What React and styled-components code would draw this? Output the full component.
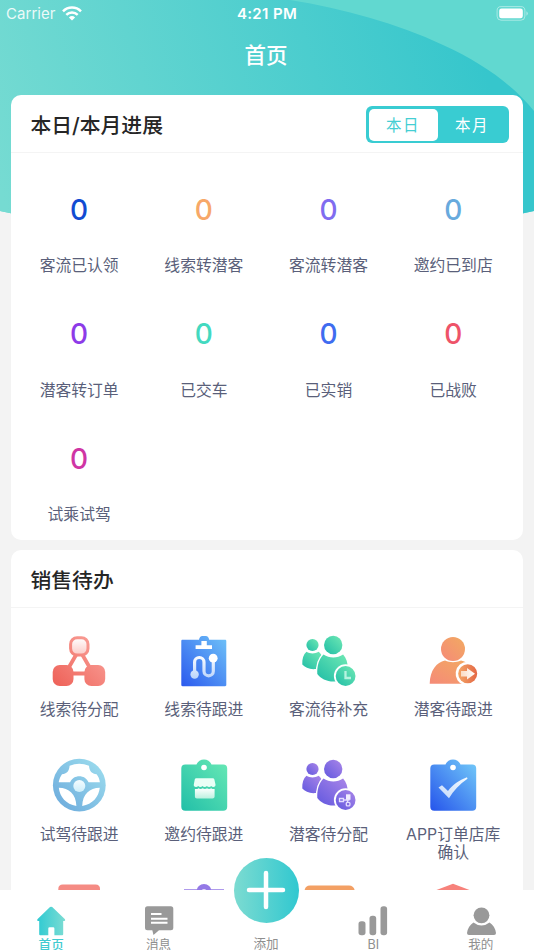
import { useState } from 'react'
import styled, { createGlobalStyle } from 'styled-components'

const GlobalStyle = createGlobalStyle`
  * {
    box-sizing: border-box;
  }

  body {
    margin: 0;
    background: #f3f3f3;
    overflow: hidden;
    font-family: Inter, 'Noto Sans CJK SC', sans-serif;
  }

  svg {
    display: block;
    flex: none;
  }

  button {
    border: 0;
    padding: 0;
    background: none;
    font: inherit;
  }
`

const Screen = styled.div`
  position: relative;
  display: flex;
  flex-direction: column;
  height: 950px;
  overflow: hidden;
  background: #f3f3f3;
`

const Backdrop = styled.svg`
  position: absolute;
  top: 0;
  left: 0;
`

const StatusBar = styled.div`
  position: relative;
  display: grid;
  grid-template-columns: 1fr auto 1fr;
  align-items: center;
  flex: none;
  height: 26px;
  padding: 0 6px 0 6px;
  color: #fff;
  font-size: 15px;
`

const Carrier = styled.div`
  display: flex;
  align-items: center;
  gap: 6px;
  color: rgba(255, 255, 255, 0.88);
  letter-spacing: 0.05px;
`

const Clock = styled.div`
  font-weight: 600;
  letter-spacing: 0.35px;
`

const Battery = styled.svg`
  justify-self: end;
`

const NavTitle = styled.h1`
  position: relative;
  flex: none;
  height: 69px;
  margin: 0;
  padding-right: 2px;
  color: #fff;
  font-size: 21.5px;
  font-weight: 500;
  line-height: 58px;
  text-align: center;
`

const Content = styled.main`
  position: relative;
  flex: 1;
  min-height: 0;
  padding: 0 11.5px 0 10.5px;
  overflow: hidden;
`

const Card = styled.section`
  height: ${(props) => props.$height}px;
  margin-bottom: 10.5px;
  border-radius: 10px;
  background: #fff;
`

const CardHeader = styled.header`
  display: flex;
  align-items: center;
  justify-content: space-between;
  height: 58px;
  padding: 2px 13.5px 0 20px;
  border-bottom: 1.5px solid #f4f4f4;
`

const CardTitle = styled.h2`
  margin: 0;
  padding-top: 3px;
  color: #262626;
  font-size: 20.8px;
  font-weight: 500;
  line-height: 30px;
`

const Segmented = styled.div`
  display: flex;
  width: 143px;
  height: 37px;
  padding: 2.5px;
  border-radius: 6px;
  background: #39ccd2;
`

const Segment = styled.button`
  flex: 1;
  padding-top: 2px;
  border-radius: 5px;
  background: ${(props) => (props.$active ? '#fff' : 'transparent')};
  color: ${(props) => (props.$active ? '#45ced3' : '#fff')};
  font-size: 15.5px;
  letter-spacing: 1.5px;
  line-height: 30px;
`

const Grid = styled.div`
  display: grid;
  grid-template-columns: repeat(4, 124.7px);
  grid-auto-rows: 124.5px;
  padding-left: 6.3px;
`

const Stat = styled.div`
  display: flex;
  flex-direction: column;
  align-items: center;
  padding-top: 39.5px;
`

const StatValue = styled.span`
  height: 34px;
  color: ${(props) => props.$color};
  font-size: 28px;
  font-weight: 500;
  line-height: 34px;
`

const Label = styled.span`
  margin-top: ${(props) => props.$gap}px;
  color: #5a5f7a;
  font-size: 15.8px;
  font-weight: 400;
  line-height: 18px;
  text-align: center;
  white-space: pre-line;
`

const Task = styled.div`
  display: flex;
  flex-direction: column;
  align-items: center;
  padding-top: 24.5px;
`

const TabBar = styled.nav`
  position: relative;
  display: grid;
  grid-template-columns: repeat(5, 107.4px);
  flex: none;
  height: 60px;
  margin-left: -2.5px;
  background: #fff;
`

const Tab = styled.button`
  display: flex;
  flex-direction: column;
  align-items: center;
  height: 60px;
  padding-top: 15px;
  color: ${(props) => (props.$active ? '#3fcbd0' : '#8f8f8f')};
  font-size: 12.6px;
  font-weight: ${(props) => (props.$active ? 500 : 400)};
  line-height: 13px;

  span {
    margin-top: 0.5px;
  }
`

const AddTab = styled(Tab)`
  padding-top: 0;

  span {
    margin-top: 14.5px;
  }
`

const AddButton = styled.div`
  display: grid;
  place-items: center;
  flex: none;
  width: 65px;
  height: 65px;
  margin-top: -32.5px;
  margin-left: 0.5px;
  border-radius: 50%;
  background: linear-gradient(90deg, #7cdbd1, #31c8d0);
`

function Gradient({ id, from, to, vertical }) {
  return (
    <linearGradient id={id} x1="0" y1={vertical ? '0' : '1'} x2={vertical ? '0' : '1'} y2={vertical ? '1' : '0'}>
      <stop offset="0" stopColor={from} />
      <stop offset="1" stopColor={to} />
    </linearGradient>
  )
}

function Icon({ children }) {
  return (
    <svg width="56" height="56" viewBox="0 0 56 56" fill="none">
      {children}
    </svg>
  )
}

function ShareIcon() {
  return (
    <Icon>
      <defs>
        <linearGradient id="share" gradientUnits="userSpaceOnUse" x1="4" y1="52" x2="46" y2="10">
          <stop offset="0" stopColor="#ee6259" />
          <stop offset="1" stopColor="#f99d95" />
        </linearGradient>
        <Gradient id="shareTop" vertical from="#fff" to="#fbc9c5" />
      </defs>
      <path d="M25 22 17.5 35M31.5 22 39 35M20 40.5h16" stroke="url(#share)" strokeWidth="3.8" />
      <rect x="19.6" y="4.7" width="17.4" height="17.4" rx="6.5" fill="url(#shareTop)" stroke="url(#share)" strokeWidth="3" />
      <rect x="1.7" y="32" width="20.8" height="21" rx="7" fill="url(#share)" />
      <rect x="33.4" y="32" width="20.8" height="21" rx="7" fill="url(#share)" />
    </Icon>
  )
}

function RouteIcon() {
  return (
    <Icon>
      <defs>
        <Gradient id="route" from="#2b59ee" to="#6fc3f8" />
        <linearGradient id="routeLine" gradientUnits="userSpaceOnUse" x1="28" y1="22" x2="28" y2="45">
          <stop offset="0" stopColor="#fff" />
          <stop offset="1" stopColor="#bcd5fb" />
        </linearGradient>
      </defs>
      <path d="M6.5 6.7H23c.3-2.3 1.6-3.7 3.4-3.7h3.4c1.8 0 3.1 1.4 3.4 3.7h15.9c.7 0 1.2.5 1.2 1.2v44.2c0 .7-.5 1.2-1.2 1.2H6.5c-.7 0-1.2-.5-1.2-1.2V7.9c0-.7.5-1.2 1.2-1.2Z" fill="url(#route)" />
      <path d="M25.4 8h5.4v4.2H36V16H19.6v-3.8h5.8Z" fill="#fff" />
      <path d="M18.6 41V29.2a4.7 4.7 0 0 1 9.4 0v9a4.65 4.65 0 0 0 9.3 0V25" stroke="url(#routeLine)" strokeWidth="3.2" />
      <circle cx="18.6" cy="41.5" r="4.2" fill="url(#routeLine)" />
      <circle cx="37.2" cy="25.2" r="4.4" fill="#fff" />
    </Icon>
  )
}

function PeopleIcon({ id, from, to, children }) {
  const fill = `url(#${id})`
  return (
    <Icon>
      <defs>
        <Gradient id={id} from={from} to={to} />
      </defs>
      <circle cx="11.5" cy="12" r="6.1" fill={fill} />
      <path d="M5.5 18.8c3.6 2.3 8.4 2.3 12 0 1.4 1 2.4 2.3 3.2 4L15 36C9 36.7 4 34.8 1.3 31.6 1 26 2.4 21.4 5.5 18.8Z" fill={fill} />
      <path
        d="M22.5 21.5c5.8 4 13.8 4 19.6 0 3.4 3.7 4.7 8.5 4.6 13.5L41 46.5c-8.5 4.5-20.5 1-24.7-5.5-.4-8 1.7-15.3 6.2-19.5Z"
        fill={fill}
        stroke="#fff"
        strokeWidth="2.6"
        paintOrder="stroke"
      />
      <circle cx="32.2" cy="12" r="9.2" fill={fill} />
      <circle cx="44.6" cy="43" r="11.7" fill="#fff" />
      <circle cx="44.6" cy="43" r="9.9" fill={fill} />
      {children}
    </Icon>
  )
}

function FollowIcon() {
  return (
    <Icon>
      <defs>
        <Gradient id="follow" from="#f58a78" to="#f2aa61" />
        <linearGradient id="followBadge" x1="0" y1="0" x2="1" y2="0">
          <stop offset="0" stopColor="#f3a666" />
          <stop offset="1" stopColor="#e46745" />
        </linearGradient>
        <linearGradient id="followArrow" x1="0" y1="0" x2="1" y2="0">
          <stop offset="0" stopColor="#fbdcc4" />
          <stop offset="1" stopColor="#fff" />
        </linearGradient>
      </defs>
      <path d="M4.7 50.8C5.2 37 11.5 29.5 20 27.6c5 2.3 11 2.3 16 0 3.5.8 6.500 2.2 9 4.7v18.5Z" fill="url(#follow)" />
      <circle cx="28" cy="16" r="12" fill="url(#follow)" />
      <path d="M42.7 28.7a12 12 0 0 0-3.500 23.500h12.500v-23.500Z" fill="#fff" />
      <circle cx="42.7" cy="40.7" r="9.5" fill="url(#followBadge)" />
      <path d="M36 38h6v-3l8 5.7-8 5.7v-3h-6Z" fill="url(#followArrow)" />
    </Icon>
  )
}

function WheelIcon() {
  return (
    <Icon>
      <defs>
        <Gradient id="wheel" from="#69a7db" to="#9fe0ef" />
        <Gradient id="wheelHub" vertical from="#f4fcff" to="#cdeefa" />
      </defs>
      <circle cx="28.3" cy="28.2" r="26.4" fill="url(#wheel)" />
      <path d="M7.7 25.3C8.3 22 9.5 19.5 11 17.3c4.5-.2 7.3-3.3 7.6-8.5q9.7-4.2 19.4 0c.3 5.2 3.1 8.3 7.6 8.5 1.7 2.2 2.9 4.7 3.3 8H37.5c-3-8.200-15.400-8.200-18.400 0Z" fill="#fff" />
      <path d="M7.8 30.8C18 31 25 37 25.4 49 15 47.3 8.8 40 7.8 30.8ZM48.8 30.8C38.6 31 31.6 37 31.2 49c10.4-1.7 16.6-9 17.6-18.2Z" fill="#fff" />
      <circle cx="28.3" cy="29" r="6" fill="url(#wheelHub)" />
    </Icon>
  )
}

function ClipIcon({ id, from, to, children }) {
  return (
    <Icon>
      <defs>
        <Gradient id={id} from={from} to={to} />
      </defs>
      <path
        d="M9.3 7.6h11.2c1-3 3.9-5.1 7.5-5.1s6.5 2.1 7.5 5.1h11.7a4 4 0 0 1 4 4v38.1a4 4 0 0 1-4 4H9.3a4 4 0 0 1-4-4V11.6a4 4 0 0 1 4-4Z"
        fill={`url(#${id})`}
      />
      <circle cx="28" cy="10.5" r="2.8" fill="#fff" />
      {children}
    </Icon>
  )
}

function ShopIcon() {
  return (
    <ClipIcon id="shop" from="#22bfa8" to="#68e9b5">
      <defs>
        <Gradient id="shopBase" vertical from="#fff" to="#bdf1e0" />
      </defs>
      <path d="M20.2 21.2h16.700c.7 0 1.2.4 1.4 1.1l1.2 5.2c.2 1.5-.7 2.5-2.1 2.5-1 0-1.7-.4-2.2-1.1-.9 1.5-3.3 1.5-4.3 0-1 1.5-3.4 1.5-4.400 0-1 1.500-3.300 1.500-4.300 0-.6.7-1.300 1.100-2.200 1.100-1.600 0-2.500-1-2.200-2.500l1-5.200c.2-.7.7-1.100 1.400-1.100Z" fill="#eafff6" />
      <path d="M18.9 32c1.6.3 2.8-.1 3.6-.8 1.2 1 3 1 4.2 0 1.2 1 3.2 1 4.3 0 1.2 1 3.1 1 4.2 0 .9.7 2 1.1 3.4.8v7.5c0 1.2-.9 2-2 2H20.900c-1.200 0-2-.8-2-2Z" fill="url(#shopBase)" />
    </ClipIcon>
  )
}

function CheckIcon() {
  return (
    <ClipIcon id="check" from="#2554eb" to="#74ccf9">
      <defs>
        <Gradient id="checkMark" from="#c4dafb" to="#f4faff" />
      </defs>
      <path d="M13.5 30.5 17 28.3 23 34c5-6.5 11-10.8 19-13.7l.5 1.5C34.5 27.5 28.5 33.5 24 41.3Z" fill="url(#checkMark)" />
    </ClipIcon>
  )
}

const stats = [
  { label: '客流已认领', color: '#124bd2' },
  { label: '线索转潜客', color: '#f7a868' },
  { label: '客流转潜客', color: '#806cf0' },
  { label: '邀约已到店', color: '#68aadd' },
  { label: '潜客转订单', color: '#8d3be8' },
  { label: '已交车', color: '#43d9c0' },
  { label: '已实销', color: '#3f6cf0' },
  { label: '已战败', color: '#ee5369' },
  { label: '试乘试驾', color: '#cf35a4' },
]

const tasks = [
  { label: '线索待分配', icon: <ShareIcon /> },
  { label: '线索待跟进', icon: <RouteIcon /> },
  {
    label: '客流待补充',
    icon: (
      <PeopleIcon id="fill" from="#20bda6" to="#70e9b4">
        <path d="M44.5 38v7h5.5" stroke="#b6f3df" strokeWidth="2.3" />
      </PeopleIcon>
    ),
  },
  { label: '潜客待跟进', icon: <FollowIcon /> },
  { label: '试驾待跟进', icon: <WheelIcon /> },
  { label: '邀约待跟进', icon: <ShopIcon /> },
  {
    label: '潜客待分配',
    icon: (
      <PeopleIcon id="assign" from="#6258df" to="#aa86e8">
        <path d="M38.5 41.5h4v3h-4ZM42.5 43h6M46.5 43v3" stroke="#e4ddff" strokeWidth="1.3" />
        <path d="M45 37.3h4.5v5.500H45Z" fill="#f2edff" />
        <rect x="45.3" y="45.3" width="3.6" height="3.6" rx="1" stroke="#e4ddff" strokeWidth="1.3" />
      </PeopleIcon>
    ),
  },
  { label: 'APP订单店库\n确认', icon: <CheckIcon /> },
  {
    icon: (
      <Icon>
        <path d="M7.3 20V7q0-4.500 4.500-4.500h32.700q4.500 0 4.500 4.500V20Z" fill="#f58b84" />
      </Icon>
    ),
  },
  {
    icon: (
      <Icon>
        <path d="M8 7.2h40V20H8Z" fill="#9479e6" />
        <circle cx="28" cy="9.2" r="7.3" fill="#9479e6" />
        <circle cx="28" cy="10.2" r="3" fill="#fff" />
      </Icon>
    ),
  },
  {
    icon: (
      <Icon>
        <path d="M3.5 20V9Q4 3.500 9 3.500h39q5 0 5.800 5.500V20Z" fill="#f3a064" />
      </Icon>
    ),
  },
  {
    icon: (
      <Icon>
        <path d="m28 1.8 28 10.500H0Z" fill="#f7827b" />
      </Icon>
    ),
  },
]

const tabs = [
  {
    label: '首页',
    icon: (
      <svg width="32" height="32" viewBox="0 0 32 32">
        <defs>
          <linearGradient id="home" x1="0" y1="0" x2="1" y2="0">
            <stop offset="0" stopColor="#2fcad2" />
            <stop offset="1" stopColor="#7cdcd3" />
          </linearGradient>
        </defs>
        <path d="M15 2.1q1.1-.9 2.2 0L30 14.3q.6 1.5-.6 1.8h-1.200v13.200q0 1-1 1h-7.800V23.500q0-1.300-1.300-1.300h-3.500q-1.300 0-1.300 1.300v6.800H5.200q-1 0-1-1V16.100H3q-1.400-.4-.6-1.800Z" fill="url(#home)" />
      </svg>
    ),
  },
  {
    label: '消息',
    icon: (
      <svg width="32" height="32" viewBox="0 0 32 32" fill="none">
        <path d="M4.5 1.3h23.300a2.500 2.500 0 0 1 2.500 2.500v19a2.500 2.500 0 0 1-2.500 2.500H16L10.500 30 9.300 25.300H4.500A2.500 2.500 0 0 1 2 22.800v-19a2.500 2.500 0 0 1 2.500-2.500Z" fill="#999" />
        <path d="M8 9h10.5M8 13.800h16.500M8 17.700h16.500" stroke="#fff" strokeWidth="2" />
      </svg>
    ),
  },
  { label: '添加', add: true },
  {
    label: 'BI',
    icon: (
      <svg width="32" height="32" viewBox="0 0 32 32" fill="#999">
        <rect x="1.500" y="16.300" width="7" height="14" rx="2.800" />
        <rect x="12.500" y="10.800" width="6.700" height="19.500" rx="2.800" />
        <rect x="23.500" y="1.300" width="6.600" height="29" rx="2.800" />
      </svg>
    ),
  },
  {
    label: '我的',
    icon: (
      <svg width="32" height="32" viewBox="0 0 32 32" fill="#999">
        <circle cx="16.500" cy="10.300" r="7.900" />
        <path d="M8.500 17.500q8 6.200 16 0 5.500 3.500 6.500 10.500 0 2-2 2H4q-2 0-2-2 1-7 6.500-10.500Z" />
      </svg>
    ),
  },
]

export default function App() {
  const [range, setRange] = useState('本日')
  const [current, setCurrent] = useState('首页')

  return (
    <>
      <GlobalStyle />
      <Screen>
        <Backdrop width="534" height="250" viewBox="0 0 534 250">
          <defs>
            <clipPath id="arc">
              <path d="M0 0H534V211Q267 270 0 211Z" />
            </clipPath>
            <linearGradient id="sky" gradientUnits="userSpaceOnUse" x1="0" y1="190" x2="480" y2="50">
              <stop offset="0" stopColor="#76dbd2" />
              <stop offset="1" stopColor="#36c6cc" />
            </linearGradient>
          </defs>
          <g clipPath="url(#arc)">
            <path d="M0 0H534V250H0Z" fill="#61d8d0" />
            <path d="M0 0H290C345 9 396 23 443 45C483 63 514 86 534 111V250H0Z" fill="url(#sky)" />
          </g>
        </Backdrop>

        <StatusBar>
          <Carrier>
            Carrier
            <svg width="20" height="15" viewBox="0 0 20 15" fill="none" stroke="#fff" strokeWidth="2.5">
              <path d="M1 5.3a12.8 12.8 0 0 1 18 0M4.3 8.8a8.2 8.2 0 0 1 11.4 0" />
              <path d="M6.9 11.4a4.5 4.5 0 0 1 6.2 0L10 14.6Z" fill="#fff" stroke="none" />
            </svg>
          </Carrier>
          <Clock>4:21 PM</Clock>
          <Battery width="32" height="15" viewBox="0 0 32 15" fill="none">
            <rect x="1.1" y=".6" width="27.8" height="13.6" rx="4" stroke="#fff" strokeOpacity=".45" />
            <rect x="3.2" y="2.5" width="23.6" height="9.8" rx="2.3" fill="#fff" />
            <path d="M30.500 5.3q2.4 2 0 4.4Z" fill="#fff" fillOpacity=".55" />
          </Battery>
        </StatusBar>
        <NavTitle>首页</NavTitle>

        <Content>
          <Card $height={444.5}>
            <CardHeader>
              <CardTitle>本日/本月进展</CardTitle>
              <Segmented>
                {['本日', '本月'].map((name) => (
                  <Segment key={name} $active={range === name} onClick={() => setRange(name)}>
                    {name}
                  </Segment>
                ))}
              </Segmented>
            </CardHeader>
            <Grid>
              {stats.map((stat) => (
                <Stat key={stat.label}>
                  <StatValue $color={stat.color}>0</StatValue>
                  <Label $gap={30.5}>{stat.label}</Label>
                </Stat>
              ))}
            </Grid>
          </Card>

          <Card $height={500}>
            <CardHeader>
              <CardTitle>销售待办</CardTitle>
            </CardHeader>
            <Grid>
              {tasks.map((task, index) => (
                <Task key={index}>
                  {task.icon}
                  <Label $gap={12.5}>{task.label}</Label>
                </Task>
              ))}
            </Grid>
          </Card>
        </Content>

        <TabBar>
          {tabs.map((tab) =>
            tab.add ? (
              <AddTab key={tab.label}>
                <AddButton>
                  <svg width="40" height="40" viewBox="0 0 40 40" stroke="#fff" strokeWidth="4.5" strokeLinecap="round">
                    <path d="M20 3v34M3 20h34" />
                  </svg>
                </AddButton>
                <span>{tab.label}</span>
              </AddTab>
            ) : (
              <Tab key={tab.label} $active={current === tab.label} onClick={() => setCurrent(tab.label)}>
                {tab.icon}
                <span>{tab.label}</span>
              </Tab>
            ),
          )}
        </TabBar>
      </Screen>
    </>
  )
}
